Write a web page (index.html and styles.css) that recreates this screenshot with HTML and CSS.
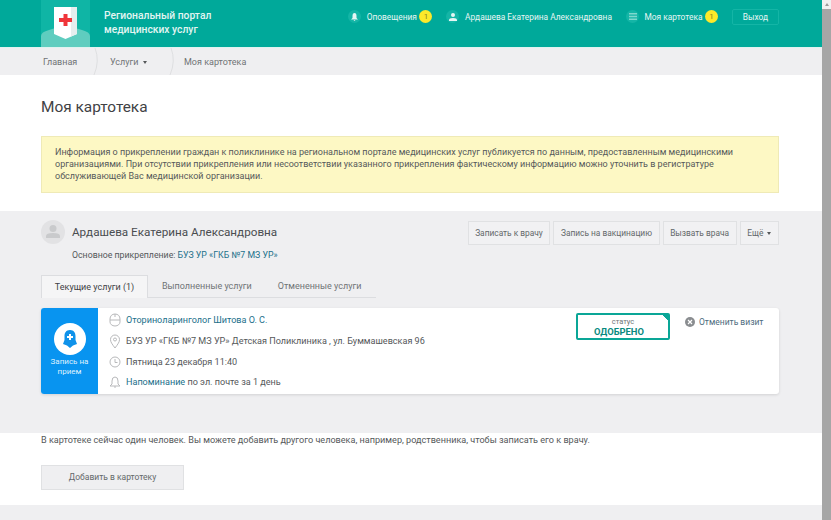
FILE: index.html
```html
<!DOCTYPE html>
<html lang="ru">
<head>
<meta charset="utf-8">
<title>Моя картотека</title>
<link rel="stylesheet" href="styles.css">
</head>
<body>
<div class="page">
  <div class="main">
    <header class="header">
      <div class="logo">
        <svg width="49" height="47" viewBox="0 0 49 47">
          <rect width="49" height="47" fill="#0fb5a5"/>
          <path d="M0 36Q0 32 8 30L24 25L41 30Q49 32 49 36V47H0Z" fill="#5fcdbf"/>
          <path d="M13 7H36V34L24.500 39L13 34Z" fill="#fff"/>
          <path d="M30 7H36V34L30 36.500Z" fill="#e6eeee"/>
          <path d="M22.500 14H26.500V18H31V22H26.500V26H22.500V22H18V18H22.500Z" fill="#f0353a"/>
        </svg>
      </div>
      <div class="brand">Региональный портал<br>медицинских услуг</div>
      <nav class="topnav">
        <a class="topitem">
          <span class="topicon"><svg width="7" height="8" viewBox="0 0 7 8"><path d="M3.500 0Q5.500 0 5.500 3V5L7 6.500H0L1.500 5V3Q1.500 0 3.500 0ZM2.500 7H4.500L3.500 8Z" fill="#e6f6f4"/></svg></span>
          <span>Оповещения</span><span class="badge">1</span>
        </a>
        <a class="topitem person">
          <span class="topicon"><svg width="8" height="8" viewBox="0 0 8 8"><circle cx="4" cy="2" r="2" fill="#e6f6f4"/><path d="M0 8V7Q0 5 4 5Q8 5 8 7V8Z" fill="#e6f6f4"/></svg></span>
          <span>Ардашева Екатерина Александровна</span>
        </a>
        <a class="topitem card">
          <span class="topicon"><svg width="8" height="7" viewBox="0 0 8 7"><path d="M0 0H8V1.500H0ZM0 2.700H8V4.200H0ZM0 5.400H8V7H0Z" fill="#7fd8cd"/></svg></span>
          <span>Моя картотека</span><span class="badge">1</span>
        </a>
        <a class="logout">Выход</a>
      </nav>
    </header>
    <div class="crumbs">
      <a class="crumb first">Главная</a>
      <svg class="sep" width="10" height="27" viewBox="0 0 10 27"><path d="M3 0Q8 13 2 27" fill="none" stroke="#dedfe1"/></svg>
      <a class="crumb second">Услуги <i class="caret small"></i></a>
      <svg class="sep" width="10" height="27" viewBox="0 0 10 27"><path d="M3 0Q8 13 2 27" fill="none" stroke="#dedfe1"/></svg>
      <a class="crumb third">Моя картотека</a>
    </div>
    <section class="intro">
      <h1 class="title">Моя картотека</h1>
      <div class="notice">Информация о прикреплении граждан к поликлинике на региональном портале медицинских услуг публикуется по данным, предоставленным медицинскими организациями. При отсутствии прикрепления или несоответствии указанного прикрепления фактическому информацию можно уточнить в регистратуре обслуживающей Вас медицинской организации.</div>
    </section>
    <section class="patient">
      <div class="patient-top">
        <div class="who">
          <div class="who-name">
            <span class="avatar"><svg width="14" height="13" viewBox="0 0 14 13"><circle cx="7" cy="3.500" r="3.500" fill="#c9cacc"/><path d="M0 13V11Q0 8 7 8Q14 8 14 11V13Z" fill="#c9cacc"/></svg></span>
            <span class="name">Ардашева Екатерина Александровна</span>
          </div>
          <div class="attach">Основное прикрепление: <a class="link">БУЗ УР «ГКБ №7 МЗ УР»</a></div>
        </div>
        <div class="actions">
          <a class="btn">Записать к врачу</a>
          <a class="btn">Запись на вакцинацию</a>
          <a class="btn">Вызвать врача</a>
          <a class="btn">Ещё <i class="caret"></i></a>
        </div>
      </div>
      <div class="tabs">
        <a class="tab active">Текущие услуги (1)</a>
        <a class="tab">Выполненные услуги</a>
        <a class="tab">Отмененные услуги</a>
      </div>
      <article class="visit">
        <div class="visit-kind">
          <span class="kind-icon"><svg width="14" height="18" viewBox="0 0 14 18"><path d="M7 0C11 0 12.500 3 12.500 6V10L14 14L10 15.500L7 18L4 15.500L0 14L1.500 10V6C1.500 3 3 0 7 0Z" fill="#0f92ea"/><path d="M6 4H8V6H10V8H8V10H6V8H4V6H6Z" fill="#fff"/></svg></span>
          <span class="kind-text">Запись на<br>прием</span>
        </div>
        <div class="visit-info">
          <div class="row"><svg class="ic" width="12" height="14" viewBox="0 0 12 14"><path d="M6 1C9 1 11 3 11 6V9C11 11 9 13 6 13C3 13 1 11 1 9V6C1 3 3 1 6 1ZM1 7H11M6 1V4" fill="none" stroke="#b8b9bb"/></svg><a class="link">Оториноларинголог Шитова О. С.</a></div>
          <div class="row"><svg class="ic" width="12" height="15" viewBox="0 0 12 15"><path d="M6 14C3 10 1.500 8 1.500 5.500A4.500 4.500 0 0 1 10.500 5.500C10.500 8 9 10 6 14Z" fill="none" stroke="#b8b9bb"/><circle cx="6" cy="5.500" r="1.500" fill="none" stroke="#b8b9bb"/></svg><span>БУЗ УР «ГКБ №7 МЗ УР» Детская Поликлиника , ул. Буммашевская 96</span></div>
          <div class="row"><svg class="ic" width="12" height="12" viewBox="0 0 12 12"><circle cx="6" cy="6" r="5" fill="none" stroke="#b8b9bb"/><path d="M6 3V6.500H8.500" fill="none" stroke="#b8b9bb"/></svg><span>Пятница 23 декабря 11:40</span></div>
          <div class="row"><svg class="ic" width="12" height="12" viewBox="0 0 12 12"><path d="M6 1Q9 1 9 5V8L11 10H1L3 8V5Q3 1 6 1ZM5 11H7" fill="none" stroke="#b8b9bb"/></svg><span><a class="link">Напоминание</a> по эл. почте за 1 день</span></div>
        </div>
        <div class="status"><span class="status-label">статус</span><span class="status-value">ОДОБРЕНО</span></div>
        <a class="cancel"><svg width="10" height="10" viewBox="0 0 10 10"><circle cx="5" cy="5" r="5" fill="#8a8d90"/><path d="M3 3L7 7M7 3L3 7" stroke="#fff" stroke-width="1.200"/></svg><span>Отменить визит</span></a>
      </article>
    </section>
    <section class="add">
      <p class="add-text">В картотеке сейчас один человек. Вы можете добавить другого человека, например, родственника, чтобы записать его к врачу.</p>
      <a class="add-btn">Добавить в картотеку</a>
    </section>
    <div class="bottom"></div>
  </div>
  <div class="scrollbar"><span class="arrow"></span><span class="thumb"></span></div>
</div>
</body>
</html>
```
FILE: styles.css
```css
* { box-sizing: border-box; }
html, body { margin: 0; padding: 0; height: 100%; overflow: hidden; }
body { background: #fff; font-family: Roboto, "Liberation Sans", sans-serif; color: #4a4d50; }
a { color: inherit; text-decoration: none; }
.page { display: flex; height: 520px; overflow: hidden; }
.main { width: 822px; flex: none; display: flex; flex-direction: column; }
.scrollbar { width: 9px; flex: none; background: #f1f1f1; display: flex; flex-direction: column; align-items: center; }
.arrow { width: 0; height: 0; margin: 3px 0 3px; border: 2.500px solid transparent; border-top: 0; border-bottom: 3px solid #9a9a9a; }
.thumb { width: 100%; flex: 1; background: #a6a6a6; }

.header { height: 48px; flex: none; display: flex; align-items: flex-start; background: #00a99a; border-bottom: 1px solid #dff3f0; padding: 0 43px 0 41px; }
.logo { width: 49px; height: 47px; flex: none; }
.logo svg { display: block; }
.brand { margin: 9px 0 0 14px; font-size: 10.300px; line-height: 14px; font-weight: 500; color: #e2f5f2; }
.topnav { margin-left: auto; display: flex; align-items: center; height: 33px; font-size: 8.400px; color: #e6f6f4; }
.topitem { display: flex; align-items: center; }
.topicon { width: 13px; height: 13px; border-radius: 50%; background: #14b5a6; display: flex; align-items: center; justify-content: center; margin-right: 5.500px; }
.badge { width: 13px; height: 13px; border-radius: 50%; background: #fde92a; color: #8a8420; text-align: center; font-size: 8px; line-height: 13px; margin-left: 2.500px; }
.person { margin-left: 14px; }
.card { margin-left: 14px; }
.logout { margin-left: 14px; width: 47px; height: 16px; border: 1px solid #14b5a6; border-radius: 2px; text-align: center; line-height: 14px; }

.crumbs { height: 27px; flex: none; display: flex; align-items: center; background: #efeff1; font-size: 9px; color: #6f7476; padding-left: 43px; }
.sep { display: block; flex: none; }
.crumb.first { width: 49px; }
.crumb.second { width: 58px; margin-left: 8px; }
.crumb.third { margin-left: 6px; }
.caret { display: inline-block; width: 0; height: 0; margin-left: 2px; vertical-align: middle; border: 2px solid transparent; border-bottom: 0; border-top: 3px solid #55585a; }

.intro { height: 136px; flex: none; padding: 0 43px 0 41px; }
.title { margin: 0; padding-top: 22px; height: 61px; font-size: 15.400px; line-height: 20px; font-weight: 400; color: #3f4245; }
.notice { height: 57px; padding: 9px 13px 0; background: #fdf8c4; border: 1px solid #efeab6; font-size: 9px; line-height: 12px; color: #55585a; }

.patient { height: 222px; flex: none; padding: 8px 43px 0 41px; background: #efeff1; }
.patient-top { display: flex; justify-content: space-between; height: 47px; }
.who-name { display: flex; align-items: center; height: 25px; }
.avatar { width: 24px; height: 24px; border-radius: 50%; background: #e2e2e4; display: flex; align-items: center; justify-content: center; margin-right: 7px; }
.name { font-size: 11.700px; color: #4a4d50; }
.attach { margin: 5px 0 0 31px; font-size: 8.750px; line-height: 12px; color: #55585a; }
.link { color: #1b6f8a; }
.actions { display: flex; gap: 3px; padding-top: 2px; }
.btn { height: 24px; padding: 0 6.600px; background: #f1f1f3; border: 1px solid #e0e1e3; font-size: 8.350px; line-height: 22px; color: #63686a; white-space: nowrap; }
.tabs { display: flex; width: 335px; height: 23px; margin-top: 9px; border-bottom: 1px solid #dcdde0; font-size: 9px; color: #6f7476; white-space: nowrap; }
.tab { padding: 0 13px; line-height: 22px; }
.tab.active { width: 107px; height: 23px; margin-right: 1px; padding: 0; text-align: center; background: #f5f5f6; border: 1px solid #dcdde0; border-bottom: 0; color: #3f4245; }
.visit { display: flex; height: 86px; margin-top: 10px; background: #fff; border-radius: 3px; box-shadow: 0 1px 3px rgba(0,0,0,.12); }
.visit-kind { width: 57px; flex: none; display: flex; flex-direction: column; align-items: center; padding-top: 15px; background: #0894f0; border-radius: 3px 0 0 3px; color: #dff1fd; font-size: 8px; line-height: 10px; text-align: center; }
.kind-icon { width: 32px; height: 32px; border-radius: 50%; background: #fff; display: flex; align-items: center; justify-content: center; margin-bottom: 2px; }
.visit-info { width: 478px; flex: none; padding: 2px 0 0 11px; font-size: 9.070px; color: #55585a; }
.row { display: flex; align-items: center; height: 20.700px; }
.ic { flex: none; margin-right: 5px; width: 12px; }
.status { width: 94px; height: 27px; margin-top: 5px; flex: none; border: 2px solid #0aa697; border-radius: 2px; display: flex; flex-direction: column; align-items: center; line-height: 10px; background: linear-gradient(225deg, #0aa697 4px, #fff 4px); }
.status-label { font-size: 7.500px; color: #6f7476; margin-top: 2px; line-height: 9px; }
.status-value { font-size: 9.400px; font-weight: 700; color: #0a8a7f; line-height: 11px; margin-right: 8px; }
.cancel { margin: 8px 0 0 15px; display: flex; align-items: center; gap: 4px; height: 12px; font-size: 8.500px; color: #4d6b7d; white-space: nowrap; }

.add { height: 72px; flex: none; padding: 0 43px 0 41px; }
.add-text { margin: 0; padding-top: 1px; font-size: 9.100px; line-height: 12px; color: #55585a; }
.add-btn { display: block; width: 143px; height: 25px; margin-top: 19px; background: #efeff1; border: 1px solid #e0e1e3; text-align: center; font-size: 8.500px; line-height: 23px; color: #63686a; }
.bottom { flex: 1; background: #efeff1; }
```
